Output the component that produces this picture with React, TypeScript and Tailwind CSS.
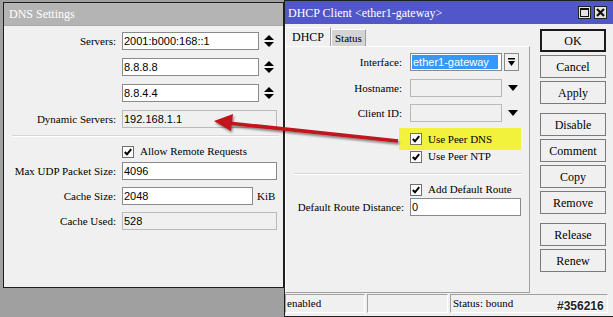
import React from "react";

const serif = "font-['Liberation_Serif',serif]";
const sans = "font-['Liberation_Sans',Arial,sans-serif]";

function Field({ w, value, disabled, className = "" }: { w: string; value?: string; disabled?: boolean; className?: string }) {
  return (
    <div
      className={`${w} h-[18px] border ${disabled ? "border-[#b9b9b9] bg-[#f0f0f0]" : "border-[#8a8a8a] bg-white"} ${sans} text-[11px] leading-[16px] pl-[1px] text-black overflow-hidden whitespace-nowrap ${className}`}
    >
      {value}
    </div>
  );
}

function Spin() {
  return (
    <svg width="10" height="12" viewBox="0 0 10 12" className="ml-[5px]">
      <polygon points="5,0 10,5 0,5" fill="#000" />
      <polygon points="0,7 10,7 5,12" fill="#000" />
    </svg>
  );
}

function Check({ label, className = "" }: { label: string; className?: string }) {
  return (
    <div className={`flex items-center h-[13px] ${className}`}>
      <div className="w-[12px] h-[12px] border border-[#6f6f6f] bg-white flex items-center justify-center">
        <svg width="8" height="8" viewBox="0 0 8 8">
          <polyline points="0.8,4 3,6.3 7.2,1.2" fill="none" stroke="#000" strokeWidth="2" />
        </svg>
      </div>
      <span className={`${serif} text-[11px] ml-[6px] text-black whitespace-nowrap`}>{label}</span>
    </div>
  );
}

function Label({ children, w }: { children: React.ReactNode; w: string }) {
  return <div className={`${w} shrink-0 text-right ${serif} text-[11px] text-black whitespace-nowrap`}>{children}</div>;
}

function DnsWindow() {
  return (
    <div className="ml-[3px] mt-[2px] w-[281px] h-[286px] border border-[#1e1e1e] bg-[#f0f0f0] flex flex-col shrink-0">
      <div className={`h-[23px] bg-[#b4b4b4] border-b border-[#a8a8a8] text-white ${serif} text-[12px] leading-[23px] pl-[5px]`}>DNS Settings</div>
      <div className="flex flex-col">
        <div className="flex items-center mt-[6px]">
          <Label w="w-[112px]">Servers:</Label>
          <div className="w-[6px]" />
          <Field w="w-[137px]" value="2001:b000:168::1" />
          <Spin />
        </div>
        <div className="flex items-center mt-[8px]">
          <div className="w-[118px]" />
          <Field w="w-[137px]" value="8.8.8.8" />
          <Spin />
        </div>
        <div className="flex items-center mt-[8px]">
          <div className="w-[118px]" />
          <Field w="w-[137px]" value="8.8.4.4" />
          <Spin />
        </div>
        <div className="flex items-center mt-[8px]">
          <Label w="w-[112px]">Dynamic Servers:</Label>
          <div className="w-[6px]" />
          <Field w="w-[155px]" value="192.168.1.1" disabled />
        </div>
        <div className="mt-[7px] ml-[8px] mr-[4px] h-[2px] border-t border-[#d6d6d6] border-b border-b-white" />
        <Check label="Allow Remote Requests" className="mt-[8px] ml-[118px]" />
        <div className="flex items-center mt-[4px]">
          <Label w="w-[112px]">Max UDP Packet Size:</Label>
          <div className="w-[6px]" />
          <Field w="w-[155px]" value="4096" />
        </div>
        <div className="flex items-center mt-[7px]">
          <Label w="w-[112px]">Cache Size:</Label>
          <div className="w-[6px]" />
          <Field w="w-[131px]" value="2048" />
          <span className={`${serif} text-[11px] ml-[4px] text-black`}>KiB</span>
        </div>
        <div className="flex items-center mt-[7px]">
          <Label w="w-[112px]">Cache Used:</Label>
          <div className="w-[6px]" />
          <Field w="w-[155px]" value="528" disabled />
        </div>
      </div>
    </div>
  );
}

function Btn({ label, def, className = "" }: { label: string; def?: boolean; className?: string }) {
  return (
    <div
      className={`w-[66px] h-[23px] ${def ? "border-2 border-[#1a1a1a]" : "border border-[#7a7a7a]"} bg-[#f0f0f0] flex items-center justify-center ${serif} text-[12px] text-black ${className}`}
    >
      {label}
    </div>
  );
}

function DhcpWindow() {
  return (
    <div className="w-[330px] h-[317px] border border-[#1e1e1e] bg-[#f0f0f0] flex flex-col shrink-0">
      <div className="h-[23px] bg-[#5157c9] flex items-center pl-[3px] pr-[6px]">
        <span className={`${serif} text-[12px] text-white whitespace-nowrap`}>DHCP Client &lt;ether1-gateway&gt;</span>
        <div className="flex-1" />
        <div className="w-[13px] h-[13px] bg-[#e4e4e4] border border-[#222] flex items-center justify-center">
          <div className="w-[9px] h-[9px] border border-[#111] border-t-2" />
        </div>
        <div className="w-[13px] h-[13px] bg-[#e4e4e4] border border-[#222] flex items-center justify-center ml-[3px]">
          <svg width="9" height="9" viewBox="0 0 9 9">
            <path d="M1 1 L8 8 M8 1 L1 8" stroke="#111" strokeWidth="2.2" />
          </svg>
        </div>
      </div>
      <div className="flex flex-1">
        <div className="w-[245px] flex flex-col">
          <div className="flex items-end mt-[3px] h-[19px]">
            <div className={`w-[46px] h-[19px] border border-b-0 border-white border-r-[#a0a0a0] bg-[#f0f0f0] ${serif} text-[12px] leading-[18px] pl-[6px] text-black`}>DHCP</div>
            <div className={`w-[35px] h-[17px] border border-b-0 border-white border-r-[#a0a0a0] bg-[#d4d4d4] ${serif} text-[11px] leading-[16px] pl-[3px] text-black`}>Status</div>
          </div>
          <div className="h-[247px] border border-t-white border-l-white border-r-[#a0a0a0] border-b-[#a0a0a0] flex flex-col">
            <div className="flex items-center mt-[6px]">
              <Label w="w-[116px]">Interface:</Label>
              <div className="w-[8px]" />
              <div className="w-[92px] h-[18px] border border-[#8a8a8a] bg-white p-[1px]">
                <div className={`w-[86px] h-[14px] bg-[#3399ff] text-white ${sans} text-[11px] leading-[14px] pl-[1px] whitespace-nowrap`}>ether1-gateway</div>
              </div>
              <div className="ml-[2px] w-[15px] h-[18px] border border-[#8a8a8a] bg-[#f0f0f0] flex items-center justify-center">
                <svg width="7" height="8" viewBox="0 0 7 8">
                  <rect x="0" y="0" width="7" height="1.5" fill="#000" />
                  <polygon points="0,3 7,3 3.5,8" fill="#000" />
                </svg>
              </div>
            </div>
            <div className="flex items-center mt-[8px]">
              <Label w="w-[116px]">Hostname:</Label>
              <div className="w-[8px]" />
              <Field w="w-[92px]" disabled />
              <svg width="10" height="6" viewBox="0 0 10 6" className="ml-[6px]">
                <polygon points="0,0 10,0 5,6" fill="#000" />
              </svg>
            </div>
            <div className="flex items-center mt-[7px]">
              <Label w="w-[116px]">Client ID:</Label>
              <div className="w-[8px]" />
              <Field w="w-[92px]" disabled />
              <svg width="10" height="6" viewBox="0 0 10 6" className="ml-[6px]">
                <polygon points="0,0 10,0 5,6" fill="#000" />
              </svg>
            </div>
            <div className="mt-[6px] ml-[113px] w-[122px] h-[22px] bg-[#f2f23c] flex items-center pl-[11px]">
              <Check label="Use Peer DNS" />
            </div>
            <Check label="Use Peer NTP" className="ml-[124px]" />
            <div className="mt-[10px] ml-[8px] mr-[7px] h-[2px] border-t border-[#d6d6d6] border-b border-b-white" />
            <Check label="Add Default Route" className="mt-[8px] ml-[124px]" />
            <div className="flex items-center mt-[2px]">
              <Label w="w-[118px]">Default Route Distance:</Label>
              <div className="w-[6px]" />
              <Field w="w-[111px]" value="0" />
            </div>
          </div>
        </div>
        <div className="flex flex-col ml-[10px] mt-[5px]">
          <Btn label="OK" def />
          <Btn label="Cancel" className="mt-[3px]" />
          <Btn label="Apply" className="mt-[3px]" />
          <Btn label="Disable" className="mt-[9px]" />
          <Btn label="Comment" className="mt-[3px]" />
          <Btn label="Copy" className="mt-[3px]" />
          <Btn label="Remove" className="mt-[3px]" />
          <Btn label="Release" className="mt-[9px]" />
          <Btn label="Renew" className="mt-[3px]" />
        </div>
      </div>
      <div className="flex h-[19px] mb-[3px] mt-[1px] gap-[2px] pr-[5px]">
        <div className={`w-[80px] border border-[#a0a0a0] border-r-white border-b-white ${serif} text-[11px] leading-[17px] pl-[1px] text-black`}>enabled</div>
        <div className="w-[81px] border border-[#a0a0a0] border-r-white border-b-white" />
        <div className={`flex-1 border border-[#a0a0a0] border-r-white border-b-white ${serif} text-[11px] leading-[17px] pl-[2px] text-black`}>Status: bound</div>
      </div>
    </div>
  );
}

export default function App() {
  return (
    <div className="relative w-[613px] h-[317px] bg-[#a0a0a0] overflow-hidden flex items-start">
      <DnsWindow />
      <DhcpWindow />
      <svg className="absolute left-0 top-0 pointer-events-none" width="613" height="317" viewBox="0 0 613 317">
        <defs>
          <filter id="sh" x="-20%" y="-50%" width="140%" height="200%">
            <feDropShadow dx="1" dy="2" stdDeviation="1.2" floodColor="#000" floodOpacity="0.45" />
          </filter>
        </defs>
        <g filter="url(#sh)">
          <line x1="398" y1="141" x2="228" y2="123" stroke="#c0121a" strokeWidth="3.5" />
          <polygon points="214,121 233,114 231,131" fill="#c0121a" />
        </g>
      </svg>
      <div
        className={`absolute left-[557px] top-[300px] ${sans} font-bold text-[12px] leading-[13px] text-[#222] [text-shadow:1px_0_0_#fff,-1px_0_0_#fff,0_1px_0_#fff,0_-1px_0_#fff]`}
      >
        #356216
      </div>
    </div>
  );
}
